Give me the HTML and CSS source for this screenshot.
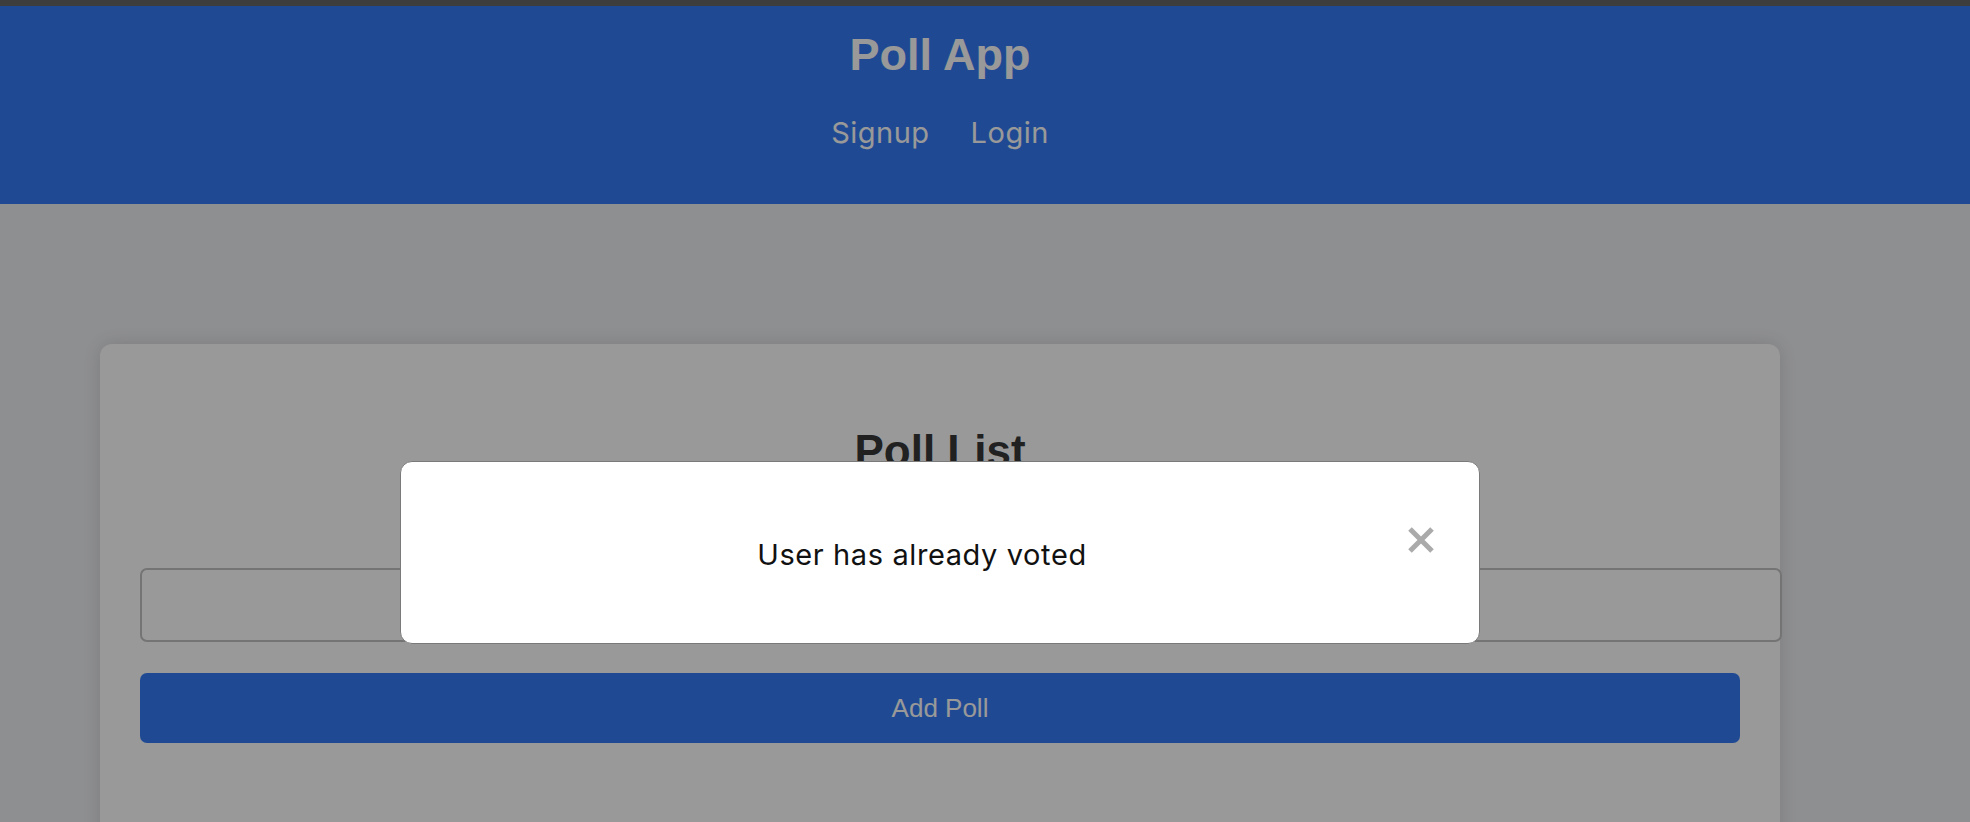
FILE: index.html
```html
<!DOCTYPE html>
<html lang="en">
<head>
<meta charset="utf-8">
<title>Poll App</title>
<link rel="stylesheet" href="styles.css">
</head>
<body>
<div class="topbar"></div>
<header class="header">
  <h1 class="brand">Poll App</h1>
  <nav class="nav">
    <a class="nav-link" href="#">Signup</a>
    <a class="nav-link" href="#">Login</a>
  </nav>
</header>
<main class="main">
  <section class="card">
    <h2 class="card-title">Poll List</h2>
    <input class="poll-input" type="text">
    <button class="add-btn" type="button">Add Poll</button>
  </section>
</main>
<div class="overlay"></div>
<div class="modal">
  <p class="modal-text">User has already voted</p>
  <button class="modal-close" type="button" aria-label="Close">
    <svg width="28" height="28" viewBox="0 0 28 28"><path d="M3 3 L25 25 M25 3 L3 25" stroke="#aaaaaa" stroke-width="5" fill="none"/></svg>
  </button>
</div>
</body>
</html>
```
FILE: styles.css
```css
* { box-sizing: border-box; }
html, body { margin: 0; padding: 0; }
body {
  background: #edeef2;
  font-family: Inter, "Liberation Sans", sans-serif;
  overflow: hidden;
  height: 822px;
}
.topbar { height: 6px; background: #666666; }
.header {
  background: #347bf5;
  padding: 24px 90px 54px 0;
  display: flex;
  flex-direction: column;
  align-items: center;
}
.brand {
  margin: 0;
  font-family: "Liberation Sans", Arial, sans-serif;
  font-weight: bold;
  font-size: 45px;
  line-height: 50px;
  color: #ffffff;
}
.nav {
  margin-top: 36px;
  display: flex;
  gap: 41px;
}
.nav-link {
  color: #ffffff;
  text-decoration: none;
  font-size: 29px;
  line-height: 34px;
  letter-spacing: 0.5px;
}
.main { padding: 140px 190px 0 100px; }
.card {
  background: #ffffff;
  border-radius: 12px;
  box-shadow: 0 0 18px rgba(0,0,0,0.12);
  padding: 40px 40px 120px;
  display: flex;
  flex-direction: column;
  align-items: flex-start;
}
.card-title {
  align-self: stretch;
  text-align: center;
  margin: 42px 0 92px;
  font-family: "Liberation Sans", Arial, sans-serif;
  font-weight: bold;
  font-size: 44px;
  line-height: 50px;
  color: #383838;
}
.poll-input {
  display: block;
  width: 1642px;
  height: 74px;
  padding: 0 19px;
  border: 2px solid #c2c2c2;
  border-radius: 7px;
  background: #ffffff;
  font-size: 24px;
}
.add-btn {
  margin-top: 31px;
  width: 1600px;
  height: 70px;
  border: none;
  border-radius: 7px;
  background: #347bf5;
  color: #ffffff;
  font-family: "Liberation Sans", Arial, sans-serif;
  font-size: 26px;
}
.overlay {
  position: fixed;
  inset: 0;
  background: rgba(0,0,0,0.4);
}
.modal {
  position: fixed;
  left: 400px;
  top: 461px;
  width: 1080px;
  height: 183px;
  background: #ffffff;
  border: 1px solid #7a7a7a;
  border-radius: 12px;
  padding: 4px 40px 0;
  display: flex;
  align-items: center;
}
.modal-text {
  flex: 1;
  margin: 0;
  text-align: center;
  font-size: 29px;
  line-height: 34px;
  letter-spacing: 0.6px;
  color: #111111;
}
.modal-close {
  width: 36px;
  height: 36px;
  margin-bottom: 30px;
  padding: 0;
  border: none;
  background: transparent;
  display: flex;
  align-items: center;
  justify-content: center;
}
```
